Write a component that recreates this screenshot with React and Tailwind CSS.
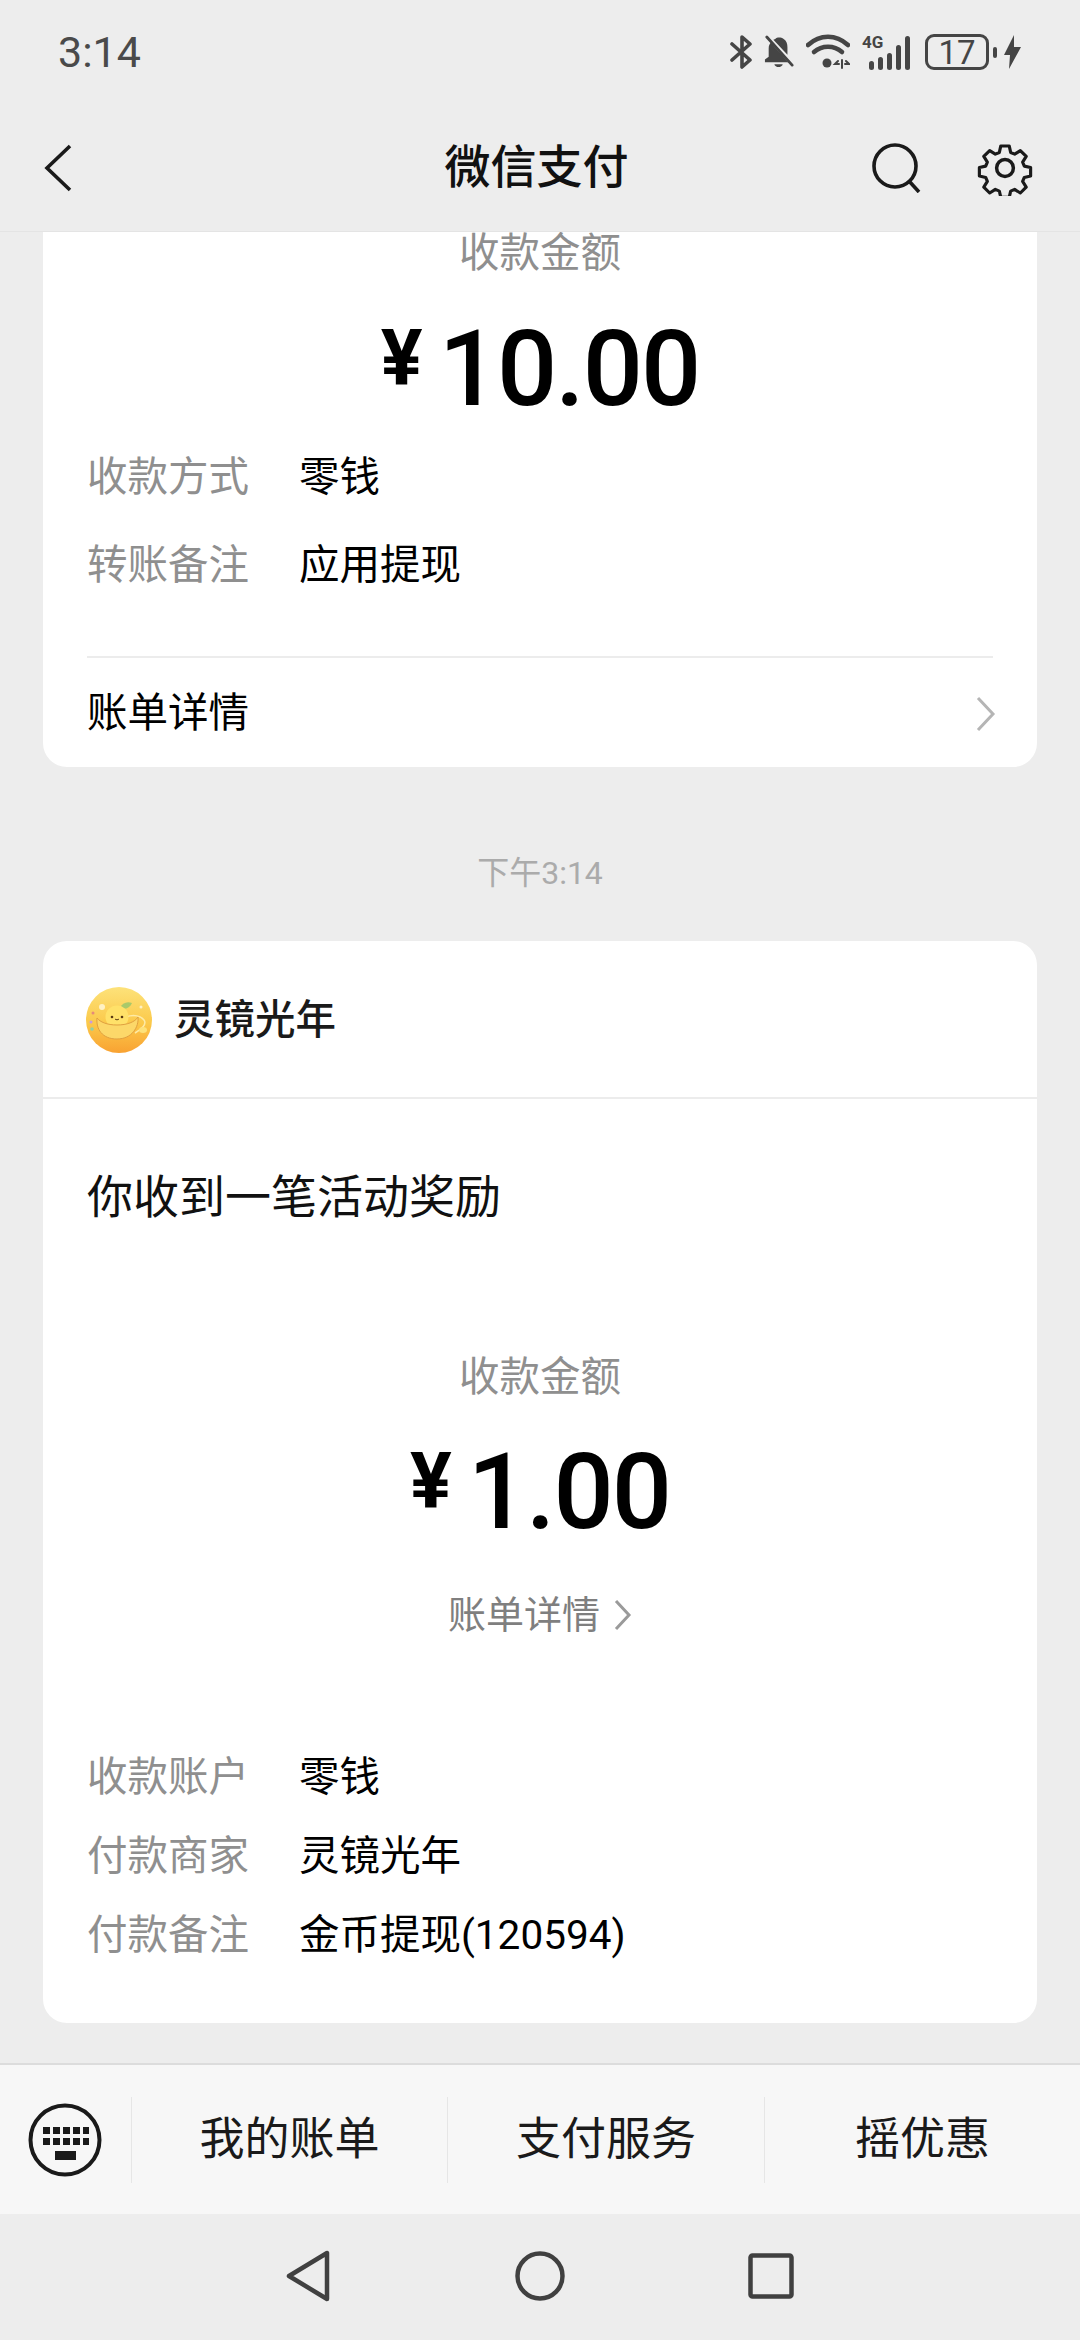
const font = { fontFamily: '"Roboto", "Noto Sans CJK SC", sans-serif' };

function StatusIcons() {
  return (
    <div className="flex items-center text-[#454545]">
      <svg width="22" height="34" viewBox="0 0 22 34" fill="none" stroke="currentColor" strokeWidth="3.6" strokeLinejoin="round" strokeLinecap="round">
        <path d="M2 9l18 16-8 7V2l8 7L2 25" />
      </svg>
      <svg className="ml-[12px]" width="30" height="36" viewBox="0 0 32 36" fill="currentColor">
        <path d="M8 7l15 17 4 3v2H1v-3l4-3v-9c0-3 1-5 3-7zM12 4c2-2 6-2 9 0 3 2 4 5 4 9v8L10 5z" />
        <path d="M11 31h9c-1 4-8 4-9 0z" />
        <path d="M2 2l28 31" stroke="#ededed" strokeWidth="1" />
        <path d="M3 2l27 30" stroke="currentColor" strokeWidth="3" strokeLinecap="round" />
      </svg>
      <svg className="ml-[12px]" width="44" height="36" viewBox="0 0 44 36" fill="none" stroke="currentColor" strokeWidth="4.600" strokeLinecap="round">
        <path d="M2 11c12-11 28-11 40 0" />
        <path d="M8 18c8-7 20-7 28 0" />
        <circle cx="21" cy="29" r="4.500" fill="currentColor" stroke="none" />
        <path d="M32 27l-3 3h4M40 27l3 3h-4M36 26v8" strokeWidth="2" />
      </svg>
      <div className="relative ml-[12px] flex h-[36px] w-[50px] items-end gap-[4px] pl-[7px]">
        <span className="absolute left-0 top-[-2px] text-[17px] font-bold leading-[20px]">4G</span>
        <i className="h-[9px] w-[5px] rounded-full bg-current" />
        <i className="h-[13px] w-[5px] rounded-full bg-current" />
        <i className="h-[17px] w-[5px] rounded-full bg-current" />
        <i className="h-[25px] w-[5px] rounded-full bg-current" />
        <i className="h-[34px] w-[5px] rounded-full bg-current" />
      </div>
      <div className="ml-[13px] flex h-[36px] w-[64px] items-center justify-center rounded-[9px] border-[3px] border-[#454545] text-[33px] leading-none">
        17
      </div>
      <i className="ml-[4px] h-[11px] w-[4px] rounded-full bg-current" />
      <svg className="ml-[7px]" width="17" height="34" viewBox="0 0 17 34" fill="currentColor">
        <path d="M10 0L0 20h6L5 34 17 12h-7z" />
      </svg>
    </div>
  );
}

function Logo() {
  return (
    <svg width="66" height="66" viewBox="0 0 66 66" className="mt-[2px] shrink-0">
      <defs>
        <linearGradient id="coin" x1="0" y1="0" x2="0" y2="1">
          <stop offset="0" stopColor="#fde27a" />
          <stop offset="0.55" stopColor="#fbc94a" />
          <stop offset="1" stopColor="#f9a232" />
        </linearGradient>
      </defs>
      <circle cx="33" cy="33" r="33" fill="url(#coin)" />
      <path d="M34 21c2-5 7-7 12-5-2 5-7 7-12 5z" fill="#a9c96a" />
      <path d="M40 30c8-3 15-1 18 3s-2 9-9 13" fill="none" stroke="#fdeaa6" strokeWidth="1.500" />
      <circle cx="31" cy="30" r="11.500" fill="#ffe169" />
      <path d="M11 31c3 4 10 7 20 7s18-3 21-8c1 10-6 22-21 22S10 42 11 31z" fill="#fcd869" stroke="#e0a040" strokeWidth="1" />
      <circle cx="26" cy="30" r="1.300" fill="#5a3a14" />
      <circle cx="36" cy="30" r="1.300" fill="#5a3a14" />
      <path d="M29 32c1 1 3 1 4 0" stroke="#5a3a14" strokeWidth="1" fill="none" />
      <circle cx="16" cy="20" r="3" fill="#fff1c4" />
      <circle cx="7" cy="26" r="1.500" fill="#e58a7a" />
      <circle cx="6" cy="42" r="1.800" fill="#8fd0a8" />
      <circle cx="5" cy="35" r="1.500" fill="#c99be0" />
      <ellipse cx="57" cy="43" rx="4" ry="3" fill="#fde27a" />
      <circle cx="55" cy="20" r="1.500" fill="#fff1c4" />
    </svg>
  );
}

function InfoRow({ label, value, height }) {
  return (
    <div className={`flex items-center text-[40.5px] ${height}`}>
      <span className="w-[212px] text-[#8f8f8f]">{label}</span>
      <span className="text-black">{value}</span>
    </div>
  );
}

function Amount({ value, className }) {
  return (
    <div className={`flex items-center justify-center pt-[8px] text-black ${className}`}>
      <span className="mb-[20px] mr-[16px] text-[78px] font-bold leading-none">¥</span>
      <span className="text-[106px] font-medium leading-none tracking-[-2px]">{value}</span>
    </div>
  );
}

export default function App() {
  return (
    <div className="flex h-[2340px] w-[1080px] flex-col overflow-hidden bg-[#ededed]" style={font}>
      <header className="h-[232px] shrink-0 border-b border-[#e4e4e4]">
        <div className="flex h-[104px] items-center justify-between pl-[58px] pr-[59px]">
          <span className="text-[43px] leading-none text-[#4a4a4a]">3:14</span>
          <StatusIcons />
        </div>
        <div className="grid h-[128px] grid-cols-[1fr_auto_1fr] items-center pl-[44px] pr-[47px]">
          <svg width="28" height="48" viewBox="0 0 28 48" fill="none" stroke="#1a1a1a" strokeWidth="3.600">
            <path d="M26 2L3 24l23 22" />
          </svg>
          <h1 className="mb-[2px] pr-[4px] text-[46px] font-medium leading-none text-[#111]">微信支付</h1>
          <div className="flex items-center justify-end gap-[56px]">
            <svg width="50" height="50" viewBox="0 0 50 50" fill="none" stroke="#1a1a1a" strokeWidth="3.600">
              <circle cx="24" cy="23" r="21" />
              <path d="M38 38l10 11" />
            </svg>
            <svg width="56" height="56" viewBox="0 0 24 24" fill="none" stroke="#1a1a1a" strokeWidth="1.500" strokeLinejoin="round">
              <path d="M10 1.500h4l.7 3.100 1.900.8 2.700-1.700 2.800 2.800-1.700 2.700.8 1.900 3 .7v4l-3 .7-.8 1.900 1.700 2.700-2.800 2.800-2.700-1.700-1.900.8-.7 3h-4l-.7-3-1.900-.8-2.700 1.700-2.800-2.800 1.700-2.700-.8-1.900-3-.7v-4l3-.7.8-1.900-1.700-2.700 2.800-2.800 2.700 1.700 1.900-.8z" transform="translate(1.200 1.200) scale(.9)" />
              <circle cx="12" cy="12" r="3.600" />
            </svg>
          </div>
        </div>
      </header>

      <main className="min-h-0 flex-1 overflow-hidden px-[43px]">
        <section className="h-[535px] overflow-hidden rounded-b-[24px] bg-white px-[44px]">
          <div className="-mt-[23px] flex h-[88px] items-center justify-center text-[40.5px] text-[#8f8f8f]">收款金额</div>
          <Amount value="10.00" className="h-[136px]" />
          <InfoRow label="收款方式" value="零钱" height="h-[88px]" />
          <InfoRow label="转账备注" value="应用提现" height="h-[89px]" />
          <div className="mt-[46px] flex h-[111px] items-center justify-between border-t-2 border-[#ececec] pt-[2px]">
            <span className="text-[40.5px] text-black">账单详情</span>
            <svg className="-mr-[3px]" width="20" height="36" viewBox="0 0 20 36" fill="none" stroke="#b5b5b5" strokeWidth="3">
              <path d="M2 2l15 16L2 34" />
            </svg>
          </div>
        </section>

        <p className="h-[174px] pt-[87px] text-center text-[32px] leading-[38px] text-[#ababab]">下午3:14</p>

        <section className="h-[1082px] rounded-[24px] bg-white">
          <div className="flex h-[158px] items-center gap-[22px] border-b-2 border-[#ececec] px-[43px]">
            <Logo />
            <span className="pt-[2px] text-[40.5px] font-medium text-[#1a1a1a]">灵镜光年</span>
          </div>
          <div className="px-[44px]">
            <p className="flex h-[196px] items-center text-[46px] text-[#111]">你收到一笔活动奖励</p>
            <div className="mt-[38px] flex h-[88px] items-center justify-center text-[40.5px] text-[#8f8f8f]">收款金额</div>
            <Amount value="1.00" className="h-[134px]" />
            <div className="mt-[30px] flex h-[60px] items-center justify-center gap-[14px] text-[38px] text-[#7f7f7f]">
              账单详情
              <svg width="18" height="32" viewBox="0 0 18 32" fill="none" stroke="#9a9a9a" strokeWidth="3">
                <path d="M2 2l13 14L2 30" />
              </svg>
            </div>
            <div className="mt-[93px]">
              <InfoRow label="收款账户" value="零钱" height="h-[79px]" />
              <InfoRow label="付款商家" value="灵镜光年" height="h-[79px]" />
              <InfoRow label="付款备注" value="金币提现(120594)" height="h-[79px]" />
            </div>
          </div>
        </section>
      </main>

      <nav className="flex h-[151px] shrink-0 border-t-2 border-[#dcdcdc] bg-[#f7f7f7]">
        <div className="flex h-[150px] w-[131px] items-center justify-center pr-[1px]">
          <svg width="74" height="74" viewBox="0 0 74 74" fill="#1a1a1a">
            <circle cx="37" cy="37" r="34.500" fill="none" stroke="#1a1a1a" strokeWidth="4" />
            <path d="M15 24h7v7h-7zM25 24h7v7h-7zM35 24h7v7h-7zM45 24h7v7h-7zM55 24h6v7h-6zM15 35h7v7h-7zM25 35h7v7h-7zM35 35h7v7h-7zM45 35h7v7h-7zM55 35h6v7h-6zM27 48h21v9H27z" />
          </svg>
        </div>
        {["我的账单", "支付服务", "摇优惠"].map((label, i) => (
          <div key={label} className={`flex h-[150px] items-center ${i === 1 ? "w-[317px]" : "w-[316px]"}`}>
            <i className="h-[86px] w-px bg-[#e6e6e6]" />
            <span className="flex-1 text-center text-[45px] text-[#1a1a1a]">{label}</span>
          </div>
        ))}
      </nav>

      <footer className="relative flex h-[126px] shrink-0 items-center justify-center gap-[183px] pb-[1px]">
        <svg className="mt-[-1px]" width="44" height="52" viewBox="0 0 44 52" fill="none" stroke="#404040" strokeWidth="4.500" strokeLinejoin="round">
          <path d="M41 3v46L3 26z" />
        </svg>
        <svg className="ml-[2px] mt-[-1px]" width="50" height="50" viewBox="0 0 50 50" fill="none" stroke="#404040" strokeWidth="4.500">
          <circle cx="25" cy="25" r="22.500" />
        </svg>
        <svg className="mt-[-1px]" width="46" height="46" viewBox="0 0 46 46" fill="none" stroke="#404040" strokeWidth="4.500" strokeLinejoin="round">
          <rect x="2.500" y="2.500" width="41" height="41" rx="2" />
        </svg>
      </footer>
    </div>
  );
}
